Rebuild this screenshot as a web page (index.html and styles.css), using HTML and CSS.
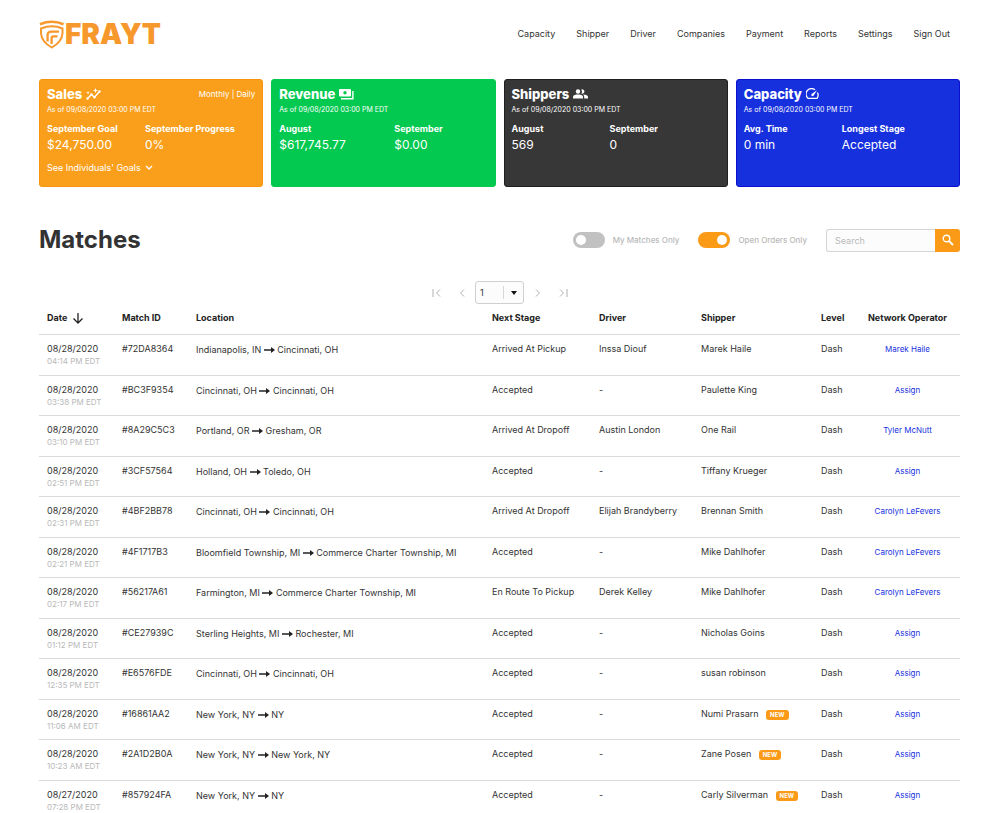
FILE: index.html
```
<!DOCTYPE html>
<html lang="en">
<head>
    <meta charset="UTF-8">
    <meta name="viewport" content="width=device-width, initial-scale=1.0">
    <title>Frayt - Matches</title>
    <link rel="stylesheet" href="styles.css">
</head>
<body>

<!-- shared arrow icon -->
<svg class="sprite" aria-hidden="true">
    <symbol id="arrow" viewBox="0 0 11 8">
        <path d="M0 5h8" stroke="currentColor" stroke-width="1.500" fill="none"/>
        <path d="M7 2l4 3-4 3z" fill="currentColor"/>
    </symbol>
</svg>

<header>
    <a class="logo" href="#">
        <svg width="26" height="29" viewBox="0 0 26 29" fill="none" stroke="currentColor" aria-hidden="true">
            <path d="M1 4.200Q13-.6 24.500 4.200" stroke-width="2.600"/>
            <path d="M2 8.500Q13 4 23.500 8.500V13.500C23 20 19 24 12.800 27.500C6.500 24 2.500 20 2 13.500Z" stroke-width="2"/>
            <path d="M20 11.600H12.500Q8.600 11.600 8.600 15V21.500" stroke-width="2.300"/>
            <path d="M18.500 16.300H14.500Q12.600 16.300 12.600 18.300V24" stroke-width="2.300"/>
        </svg>
        <span>FRAYT</span>
    </a>
    <nav>
        <a href="#">Capacity</a>
        <a href="#">Shipper</a>
        <a href="#">Driver</a>
        <a href="#">Companies</a>
        <a href="#">Payment</a>
        <a href="#">Reports</a>
        <a href="#">Settings</a>
        <a href="#">Sign Out</a>
    </nav>
</header>

<main>
    <section class="cards">
        <div class="card sales">
            <div class="card-top">
                <h2>Sales
                    <svg width="15" height="12" viewBox="0 0 15 12" aria-hidden="true">
                        <path d="M1.500 10.500L5.500 6.500L8.500 9.300L13.500 3.500" fill="none" stroke="currentColor" stroke-width="1.400"/>
                        <circle cx="1.500" cy="10.500" r="1.200" fill="currentColor"/>
                        <circle cx="5.500" cy="6.500" r="1.200" fill="currentColor"/>
                        <circle cx="8.500" cy="9.300" r="1.200" fill="currentColor"/>
                        <circle cx="13.500" cy="3.500" r="1.200" fill="currentColor"/>
                        <path d="M9.500 0l.7 1.800 1.800.7-1.800.7-.7 1.800-.7-1.800L7 2.500l1.800-.7zM2 3l.5 1.200L3.700 4.700l-1.200.5L2 6.400l-.5-1.200L.3 4.700l1.200-.5z" fill="currentColor"/>
                    </svg>
                </h2>
                <div class="period"><a href="#">Monthly</a> | <a href="#">Daily</a></div>
            </div>
            <p class="as-of">As of 09/08/2020 03:00 PM EDT</p>
            <div class="stats">
                <div><h3>September Goal</h3><p>$24,750.00</p></div>
                <div><h3>September Progress</h3><p>0%</p></div>
            </div>
            <button class="goals">See Individuals' Goals
                <svg width="8" height="6" viewBox="0 0 8 6" fill="none" stroke="currentColor" stroke-width="1.400" aria-hidden="true"><path d="M1 1l3 3 3-3"/></svg>
            </button>
        </div>

        <div class="card revenue">
            <h2>Revenue
                <svg width="15" height="12" viewBox="0 0 15 12" aria-hidden="true">
                    <path d="M1 1h10a1 1 0 0 1 1 1v5.500a1 1 0 0 1-1 1H1a1 1 0 0 1-1-1V2a1 1 0 0 1 1-1zm5 2a1.700 1.700 0 1 0 0 3.400 1.700 1.700 0 0 0 0-3.400z" fill="currentColor" fill-rule="evenodd"/>
                    <path d="M2 10.800H13.900V3" fill="none" stroke="currentColor" stroke-width="1.400"/>
                </svg>
            </h2>
            <p class="as-of">As of 09/08/2020 03:00 PM EDT</p>
            <div class="stats">
                <div><h3>August</h3><p>$617,745.77</p></div>
                <div><h3>September</h3><p>$0.00</p></div>
            </div>
        </div>

        <div class="card shippers">
            <h2>Shippers
                <svg width="15" height="12" viewBox="0 0 15 12" fill="currentColor" aria-hidden="true">
                    <circle cx="5" cy="3.500" r="2.200"/>
                    <path d="M0 10.500V9c0-2 3-2.500 5-2.500S10 7 10 9v1.500z"/>
                    <path d="M8.300 1.500a2.200 2.200 0 1 1 0 4 3.500 3.500 0 0 0 0-4zM10 6.600c2 .1 5 .7 5 2.400v1.500h-3.800V9c0-1-.4-1.800-1.200-2.400z"/>
                </svg>
            </h2>
            <p class="as-of">As of 09/08/2020 03:00 PM EDT</p>
            <div class="stats">
                <div><h3>August</h3><p>569</p></div>
                <div><h3>September</h3><p>0</p></div>
            </div>
        </div>

        <div class="card capacity">
            <h2>Capacity
                <svg width="13" height="12" viewBox="0 0 13 12" aria-hidden="true">
                    <path d="M9 1.800A5.300 5.300 0 0 0 2 10.300H11A5.300 5.300 0 0 0 11.400 4.500" fill="none" stroke="currentColor" stroke-width="1.300"/>
                    <path d="M11 2.300L7.500 7.700A1.300 1.300 0 0 1 5.600 5.900z" fill="currentColor"/>
                </svg>
            </h2>
            <p class="as-of">As of 09/08/2020 03:00 PM EDT</p>
            <div class="stats">
                <div><h3>Avg. Time</h3><p>0 min</p></div>
                <div><h3>Longest Stage</h3><p>Accepted</p></div>
            </div>
        </div>
    </section>

    <section class="toolbar">
        <h1>Matches</h1>
        <div class="filters">
            <label class="toggle"><input type="checkbox"> My Matches Only</label>
            <label class="toggle"><input type="checkbox" checked> Open Orders Only</label>
            <form class="search">
                <input type="text" placeholder="Search" aria-label="Search">
                <button type="button" aria-label="Search">
                    <svg width="12" height="12" viewBox="0 0 12 12" fill="none" stroke="currentColor" aria-hidden="true">
                        <circle cx="4.500" cy="4.500" r="3.300" stroke-width="1.400"/>
                        <path d="M7 7l4 4" stroke-width="1.800"/>
                    </svg>
                </button>
            </form>
        </div>
    </section>

    <div class="pager">
        <button aria-label="First page"><svg width="9" height="8" viewBox="0 0 9 8"><path d="M1 0v8M8 .5L4.500 4 8 7.500"/></svg></button>
        <button aria-label="Previous page"><svg width="9" height="8" viewBox="0 0 9 8"><path d="M6 .5L2.500 4 6 7.500"/></svg></button>
        <div class="page-select">
            <select aria-label="Page">
                <option>1</option>
                <option>2</option>
                <option>3</option>
            </select>
            <span class="caret"></span>
        </div>
        <button aria-label="Next page"><svg width="9" height="8" viewBox="0 0 9 8"><path d="M3 .5L6.500 4 3 7.500"/></svg></button>
        <button aria-label="Last page"><svg width="9" height="8" viewBox="0 0 9 8"><path d="M8 0v8M1 .5L4.500 4 1 7.500"/></svg></button>
    </div>

    <table>
        <colgroup>
            <col class="col-date">
            <col class="col-id">
            <col>
            <col class="col-stage">
            <col class="col-driver">
            <col class="col-shipper">
            <col class="col-level">
            <col class="col-operator">
        </colgroup>
        <thead>
            <tr>
                <th>Date <svg class="sort" width="10" height="11" viewBox="0 0 10 11" fill="none" stroke="currentColor" stroke-width="1.300" aria-hidden="true"><path d="M5 0v10M.5 5.500L5 10l4.500-4.500"/></svg></th>
                <th>Match ID</th>
                <th>Location</th>
                <th>Next Stage</th>
                <th>Driver</th>
                <th>Shipper</th>
                <th>Level</th>
                <th>Network Operator</th>
            </tr>
        </thead>
        <tbody>
            <tr>
                <td>08/28/2020<small>04:14 PM EDT</small></td>
                <td>#72DA8364</td>
                <td class="location">Indianapolis, IN <svg class="arrow"><use href="#arrow"/></svg> Cincinnati, OH</td>
                <td>Arrived At Pickup</td>
                <td>Inssa Diouf</td>
                <td>Marek Haile</td>
                <td>Dash</td>
                <td><a href="#">Marek Haile</a></td>
            </tr>
            <tr>
                <td>08/28/2020<small>03:38 PM EDT</small></td>
                <td>#BC3F9354</td>
                <td class="location">Cincinnati, OH <svg class="arrow"><use href="#arrow"/></svg> Cincinnati, OH</td>
                <td>Accepted</td>
                <td>-</td>
                <td>Paulette King</td>
                <td>Dash</td>
                <td><a href="#">Assign</a></td>
            </tr>
            <tr>
                <td>08/28/2020<small>03:10 PM EDT</small></td>
                <td>#8A29C5C3</td>
                <td class="location">Portland, OR <svg class="arrow"><use href="#arrow"/></svg> Gresham, OR</td>
                <td>Arrived At Dropoff</td>
                <td>Austin London</td>
                <td>One Rail</td>
                <td>Dash</td>
                <td><a href="#">Tyler McNutt</a></td>
            </tr>
            <tr>
                <td>08/28/2020<small>02:51 PM EDT</small></td>
                <td>#3CF57564</td>
                <td class="location">Holland, OH <svg class="arrow"><use href="#arrow"/></svg> Toledo, OH</td>
                <td>Accepted</td>
                <td>-</td>
                <td>Tiffany Krueger</td>
                <td>Dash</td>
                <td><a href="#">Assign</a></td>
            </tr>
            <tr>
                <td>08/28/2020<small>02:31 PM EDT</small></td>
                <td>#4BF2BB78</td>
                <td class="location">Cincinnati, OH <svg class="arrow"><use href="#arrow"/></svg> Cincinnati, OH</td>
                <td>Arrived At Dropoff</td>
                <td>Elijah Brandyberry</td>
                <td>Brennan Smith</td>
                <td>Dash</td>
                <td><a href="#">Carolyn LeFevers</a></td>
            </tr>
            <tr>
                <td>08/28/2020<small>02:21 PM EDT</small></td>
                <td>#4F1717B3</td>
                <td class="location">Bloomfield Township, MI <svg class="arrow"><use href="#arrow"/></svg> Commerce Charter Township, MI</td>
                <td>Accepted</td>
                <td>-</td>
                <td>Mike Dahlhofer</td>
                <td>Dash</td>
                <td><a href="#">Carolyn LeFevers</a></td>
            </tr>
            <tr>
                <td>08/28/2020<small>02:17 PM EDT</small></td>
                <td>#56217A61</td>
                <td class="location">Farmington, MI <svg class="arrow"><use href="#arrow"/></svg> Commerce Charter Township, MI</td>
                <td>En Route To Pickup</td>
                <td>Derek Kelley</td>
                <td>Mike Dahlhofer</td>
                <td>Dash</td>
                <td><a href="#">Carolyn LeFevers</a></td>
            </tr>
            <tr>
                <td>08/28/2020<small>01:12 PM EDT</small></td>
                <td>#CE27939C</td>
                <td class="location">Sterling Heights, MI <svg class="arrow"><use href="#arrow"/></svg> Rochester, MI</td>
                <td>Accepted</td>
                <td>-</td>
                <td>Nicholas Goins</td>
                <td>Dash</td>
                <td><a href="#">Assign</a></td>
            </tr>
            <tr>
                <td>08/28/2020<small>12:35 PM EDT</small></td>
                <td>#E6576FDE</td>
                <td class="location">Cincinnati, OH <svg class="arrow"><use href="#arrow"/></svg> Cincinnati, OH</td>
                <td>Accepted</td>
                <td>-</td>
                <td>susan robinson</td>
                <td>Dash</td>
                <td><a href="#">Assign</a></td>
            </tr>
            <tr>
                <td>08/28/2020<small>11:06 AM EDT</small></td>
                <td>#16861AA2</td>
                <td class="location">New York, NY <svg class="arrow"><use href="#arrow"/></svg> NY</td>
                <td>Accepted</td>
                <td>-</td>
                <td>Numi Prasarn <span class="new">NEW</span></td>
                <td>Dash</td>
                <td><a href="#">Assign</a></td>
            </tr>
            <tr>
                <td>08/28/2020<small>10:23 AM EDT</small></td>
                <td>#2A1D2B0A</td>
                <td class="location">New York, NY <svg class="arrow"><use href="#arrow"/></svg> New York, NY</td>
                <td>Accepted</td>
                <td>-</td>
                <td>Zane Posen <span class="new">NEW</span></td>
                <td>Dash</td>
                <td><a href="#">Assign</a></td>
            </tr>
            <tr>
                <td>08/27/2020<small>07:28 PM EDT</small></td>
                <td>#857924FA</td>
                <td class="location">New York, NY <svg class="arrow"><use href="#arrow"/></svg> NY</td>
                <td>Accepted</td>
                <td>-</td>
                <td>Carly Silverman <span class="new">NEW</span></td>
                <td>Dash</td>
                <td><a href="#">Assign</a></td>
            </tr>
        </tbody>
    </table>
</main>

</body>
</html>
```
FILE: styles.css
```
* {
    box-sizing: border-box;
}
html {
    overflow: hidden;
}
body {
    font-family: Inter, "Open Sans", sans-serif;
    font-size: 9px;
    line-height: 12px;
    margin: 0;
    padding: 0 40px 0 39px;
    max-height: 100vh;
    overflow-y: auto;
    scrollbar-width: none;
    background-color: #fff;
    color: #333;
}
h1, h2, h3, p {
    margin: 0;
}
a {
    color: inherit;
    text-decoration: none;
}
button, input, select {
    font: inherit;
    color: inherit;
    margin: 0;
}
button {
    border: none;
    background: none;
    padding: 0;
    cursor: pointer;
}
.sprite {
    display: none;
}

/* header */
header {
    display: flex;
    justify-content: space-between;
    align-items: center;
    height: 68px;
}
.logo {
    display: flex;
    align-items: center;
    color: #f7982d;
    font-size: 28px;
    font-weight: 900;
    line-height: 28px;
}
nav {
    display: flex;
    gap: 21px;
    padding-right: 10px;
}

/* stat cards */
.cards {
    display: grid;
    grid-template-columns: repeat(4, 1fr);
    gap: 8px;
    margin-top: 11px;
}
.card {
    min-height: 108px;
    padding: 6px 7px;
    border: 1px solid;
    border-radius: 3px;
    color: #fff;
}
.card-top {
    display: flex;
    justify-content: space-between;
    align-items: center;
}
.card h2 {
    display: flex;
    align-items: center;
    gap: 4px;
    font-size: 13px;
    font-weight: 800;
    line-height: 16px;
}
.period {
    font-size: 8px;
}
.as-of {
    font-size: 7px;
    line-height: 16px;
}
.stats {
    display: grid;
    grid-template-columns: 98px 1fr;
    margin-top: 4px;
}
.stats h3 {
    font-size: 9px;
    font-weight: 700;
    line-height: 14px;
}
.stats p {
    font-size: 12px;
    line-height: 18px;
}
.goals {
    display: flex;
    align-items: center;
    gap: 4px;
    margin-top: 8px;
}
.sales {
    background-color: #fa9f1c;
    border-color: #f7930c;
}
.revenue {
    background-color: #04c950;
    border-color: #04c950;
}
.revenue .stats {
    grid-template-columns: 115px 1fr;
}
.shippers {
    background-color: #373737;
    border-color: #202020;
}
.capacity {
    background-color: #1730dd;
    border-color: #0a12d0;
}

/* title and filters */
.toolbar {
    display: flex;
    justify-content: space-between;
    align-items: center;
    margin-top: 37px;
}
.toolbar h1 {
    font-size: 24px;
    font-weight: 700;
    line-height: 32px;
}
.filters {
    display: flex;
    align-items: center;
    gap: 19px;
}
.toggle {
    display: flex;
    align-items: center;
    gap: 8px;
    color: #b9b9b9;
    font-size: 8px;
    font-weight: 500;
}
.toggle input {
    appearance: none;
    display: flex;
    align-items: center;
    width: 32px;
    height: 16px;
    padding: 0 3px;
    border-radius: 8px;
    background-color: #c1c1c1;
}
.toggle input::before {
    content: "";
    width: 10px;
    height: 10px;
    border-radius: 50%;
    background-color: #fff;
}
.toggle input:checked {
    justify-content: flex-end;
    background-color: #fa9a17;
}
.search {
    display: flex;
}
.search input {
    width: 109px;
    height: 23px;
    padding: 0 8px;
    border: 1px solid #d6d6d6;
    border-right: none;
    border-radius: 3px 0 0 3px;
    background-color: #fcfcfc;
}
.search input::placeholder {
    color: #b9b9b9;
}
.search button {
    display: flex;
    align-items: center;
    justify-content: center;
    width: 25px;
    border-radius: 0 3px 3px 0;
    background-color: #fa9a17;
    color: #fff;
}

/* pagination */
.pager {
    display: flex;
    justify-content: center;
    align-items: center;
    margin-top: 25px;
}
.pager button {
    display: flex;
    justify-content: center;
    width: 26px;
}
.pager svg {
    fill: none;
    stroke: #b0b0b0;
}
.page-select {
    position: relative;
}
.page-select select {
    display: block;
    appearance: none;
    width: 49px;
    height: 23px;
    padding: 0 4px;
    border: 1px solid #d0d0d0;
    border-radius: 3px;
    background-color: #fcfcfc;
}
.caret {
    position: absolute;
    top: 5px;
    right: 1px;
    display: flex;
    align-items: center;
    justify-content: center;
    width: 20px;
    height: 13px;
    border-left: 1px solid #d6d6d6;
    pointer-events: none;
}
.caret::after {
    content: "";
    border: 3px solid transparent;
    border-top: 4px solid #111;
    border-bottom: none;
}

/* matches table */
table {
    width: 100%;
    margin-top: 8px;
    table-layout: fixed;
    border-collapse: separate;
    border-spacing: 0;
}
.col-date {
    width: 75px;
}
.col-id {
    width: 74px;
}
.col-stage {
    width: 107px;
}
.col-driver {
    width: 102px;
}
.col-shipper {
    width: 120px;
}
.col-level {
    width: 42px;
}
.col-operator {
    width: 105px;
}
th, td {
    padding: 8px 0 0 8px;
    border-bottom: 1px solid #dadada;
    text-align: left;
    vertical-align: top;
    white-space: nowrap;
}
th {
    padding-top: 0;
    padding-bottom: 10px;
    color: #222;
    font-weight: 700;
}
th:last-child, td:last-child {
    padding-left: 0;
    text-align: center;
}
td:last-child {
    font-size: 8px;
}
tbody tr {
    height: 40px;
}
tbody tr:nth-child(odd) {
    height: 41px;
}
td small {
    display: block;
    color: #b9b9b9;
    font-size: 8px;
}
td a {
    color: #1730dd;
}
.sort {
    margin-left: 4px;
    vertical-align: middle;
}
td.location {
    padding-top: 9px;
}
.arrow {
    width: 11px;
    height: 8px;
    color: #222;
    vertical-align: baseline;
}
.new {
    display: inline-block;
    margin-left: 5px;
    padding: 0 4px;
    border-radius: 3px;
    background-color: #fa9a17;
    color: #fff;
    font-size: 6px;
    font-weight: 700;
    line-height: 10px;
    vertical-align: middle;
}
```
